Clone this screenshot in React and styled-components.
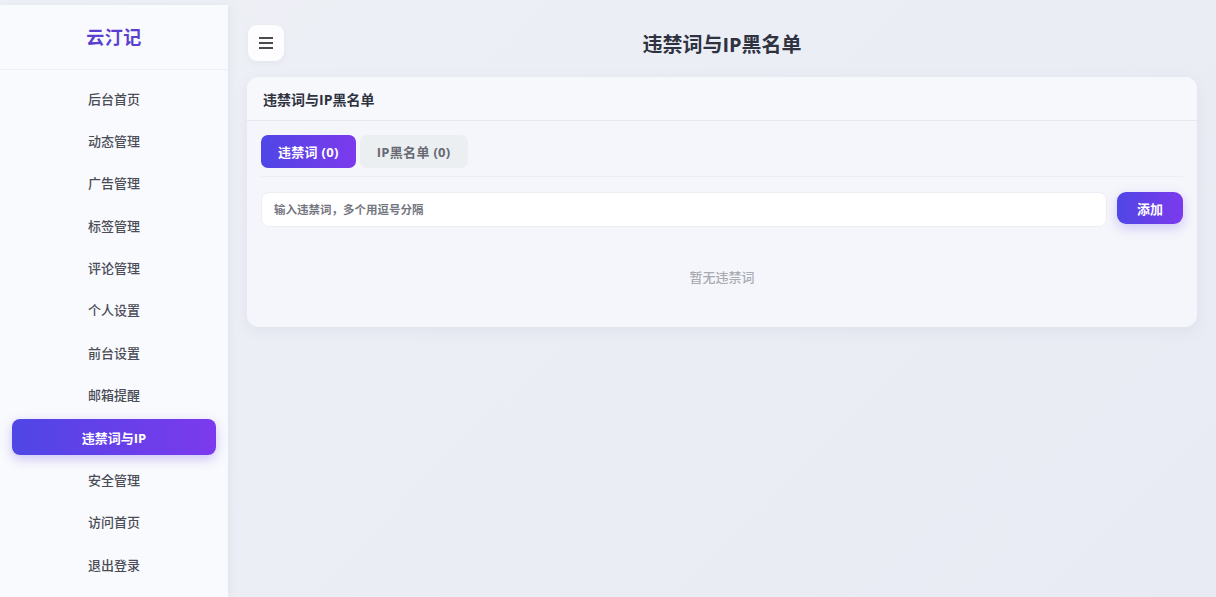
import React from "react";
import styled, { createGlobalStyle } from "styled-components";

const Global = createGlobalStyle`
  html, body { margin: 0; padding: 0; }
  body {
    font-family: "Open Sans", "Noto Sans CJK SC", sans-serif;
    background: linear-gradient(135deg, #eef0f6 0%, #e8ebf3 100%);
    min-height: 597px;
    overflow: hidden;
  }
  * { box-sizing: border-box; }
`;

const Layout = styled.div`
  display: flex;
  height: 597px;
`;

const Sidebar = styled.aside`
  width: 228px;
  flex-shrink: 0;
  margin-top: 5px;
  background: #f9fafd;
  box-shadow: 2px 0 8px rgba(120, 130, 170, 0.08);
  display: flex;
  flex-direction: column;
`;

const Logo = styled.div`
  height: 65px;
  padding-bottom: 2px;
  display: flex;
  align-items: center;
  justify-content: center;
  font-size: 18px;
  font-weight: 700;
  color: #5b3fd0;
  border-bottom: 1px solid #eef0f5;
  letter-spacing: 0.5px;
`;

const Menu = styled.nav`
  display: flex;
  flex-direction: column;
  padding: 10px 12px 0 12px;
  gap: 6.4px;
`;

const MenuItem = styled.div`
  height: 36px;
  display: flex;
  align-items: center;
  justify-content: center;
  font-size: 13px;
  font-weight: ${(p) => (p.$active ? 700 : 500)};
  color: ${(p) => (p.$active ? "#fff" : "#4a4d57")};
  border-radius: 8px;
  background: ${(p) =>
    p.$active ? "linear-gradient(90deg, #4f46e5 0%, #7c3aed 100%)" : "transparent"};
  box-shadow: ${(p) => (p.$active ? "0 4px 12px rgba(99, 70, 230, 0.3)" : "none")};
`;

const Main = styled.main`
  flex: 1;
  padding: 25px 19px 0 19px;
  display: flex;
  flex-direction: column;
  gap: 16px;
`;

const Header = styled.header`
  display: flex;
  align-items: center;
  height: 36px;
`;

const MenuButton = styled.button`
  width: 36px;
  height: 36px;
  margin-left: 1px;
  border: none;
  border-radius: 9px;
  background: #fdfdff;
  box-shadow: 0 2px 6px rgba(120, 130, 170, 0.08);
  display: flex;
  align-items: center;
  justify-content: center;
  padding: 0;
`;

const Title = styled.h1`
  flex: 1;
  margin: 0 37px 0 0;
  text-align: center;
  font-size: 20px;
  font-weight: 700;
  color: #2f3240;
`;

const Card = styled.section`
  background: #f5f6fb;
  border-radius: 12px;
  box-shadow: 0 4px 14px rgba(120, 130, 170, 0.1);
  width: 950px;
`;

const CardHeader = styled.div`
  height: 44px;
  padding: 0 16px;
  display: flex;
  align-items: center;
  font-size: 14px;
  font-weight: 700;
  color: #2f3240;
  border-bottom: 1px solid #e6e8ee;
  background: #f7f8fc;
  border-radius: 12px 12px 0 0;
`;

const CardBody = styled.div`
  padding: 14px 14px 0 14px;
`;

const Tabs = styled.div`
  display: flex;
  gap: 4px;
  padding-bottom: 8px;
  border-bottom: 1px solid #eceef3;
`;

const Tab = styled.button`
  height: 33px;
  padding: 0 17px;
  border: none;
  border-radius: 7px;
  font-family: inherit;
  font-size: 13px;
  font-weight: 700;
  letter-spacing: 0.3px;
  color: ${(p) => (p.$active ? "#fff" : "#666a73")};
  background: ${(p) =>
    p.$active ? "linear-gradient(90deg, #4f46e5 0%, #7c3aed 100%)" : "#eceff1"};
`;

const InputRow = styled.div`
  display: flex;
  align-items: center;
  gap: 10px;
  margin-top: 15px;
`;

const Input = styled.input`
  flex: 1;
  height: 35px;
  border: 1px solid #eceef3;
  border-radius: 8px;
  background: #fff;
  padding: 0 12px;
  font-family: inherit;
  font-size: 11.5px;
  font-weight: 600;
  outline: none;
  &::placeholder { color: #74777f; }
`;

const AddButton = styled.button`
  width: 66px;
  height: 32px;
  border: none;
  border-radius: 9px;
  font-family: inherit;
  font-size: 13px;
  font-weight: 700;
  color: #fff;
  background: linear-gradient(90deg, #4f46e5 0%, #7c3aed 100%);
  box-shadow: 0 4px 12px rgba(99, 70, 230, 0.28);
  margin-top: -3px;
`;

const Empty = styled.div`
  text-align: center;
  font-size: 13px;
  color: #a9abb2;
  font-weight: 500;
  padding: 40px 0 41px;
`;

const items = [
  "后台首页",
  "动态管理",
  "广告管理",
  "标签管理",
  "评论管理",
  "个人设置",
  "前台设置",
  "邮箱提醒",
  "违禁词与IP",
  "安全管理",
  "访问首页",
  "退出登录",
];

export default function App() {
  return (
    <>
      <Global />
      <Layout>
        <Sidebar>
          <Logo>云汀记</Logo>
          <Menu>
            {items.map((it) => (
              <MenuItem key={it} $active={it === "违禁词与IP"}>
                {it}
              </MenuItem>
            ))}
          </Menu>
        </Sidebar>
        <Main>
          <Header>
            <MenuButton aria-label="menu">
              <svg width="16" height="14" viewBox="0 0 16 14">
                <path d="M1 2h14M1 7h14M1 12h14" stroke="#111" strokeWidth="1.4" />
              </svg>
            </MenuButton>
            <Title>违禁词与IP黑名单</Title>
          </Header>
          <Card>
            <CardHeader>违禁词与IP黑名单</CardHeader>
            <CardBody>
              <Tabs>
                <Tab $active>违禁词 (0)</Tab>
                <Tab>IP黑名单 (0)</Tab>
              </Tabs>
              <InputRow>
                <Input placeholder="输入违禁词，多个用逗号分隔" />
                <AddButton>添加</AddButton>
              </InputRow>
              <Empty>暂无违禁词</Empty>
            </CardBody>
          </Card>
        </Main>
      </Layout>
    </>
  );
}
